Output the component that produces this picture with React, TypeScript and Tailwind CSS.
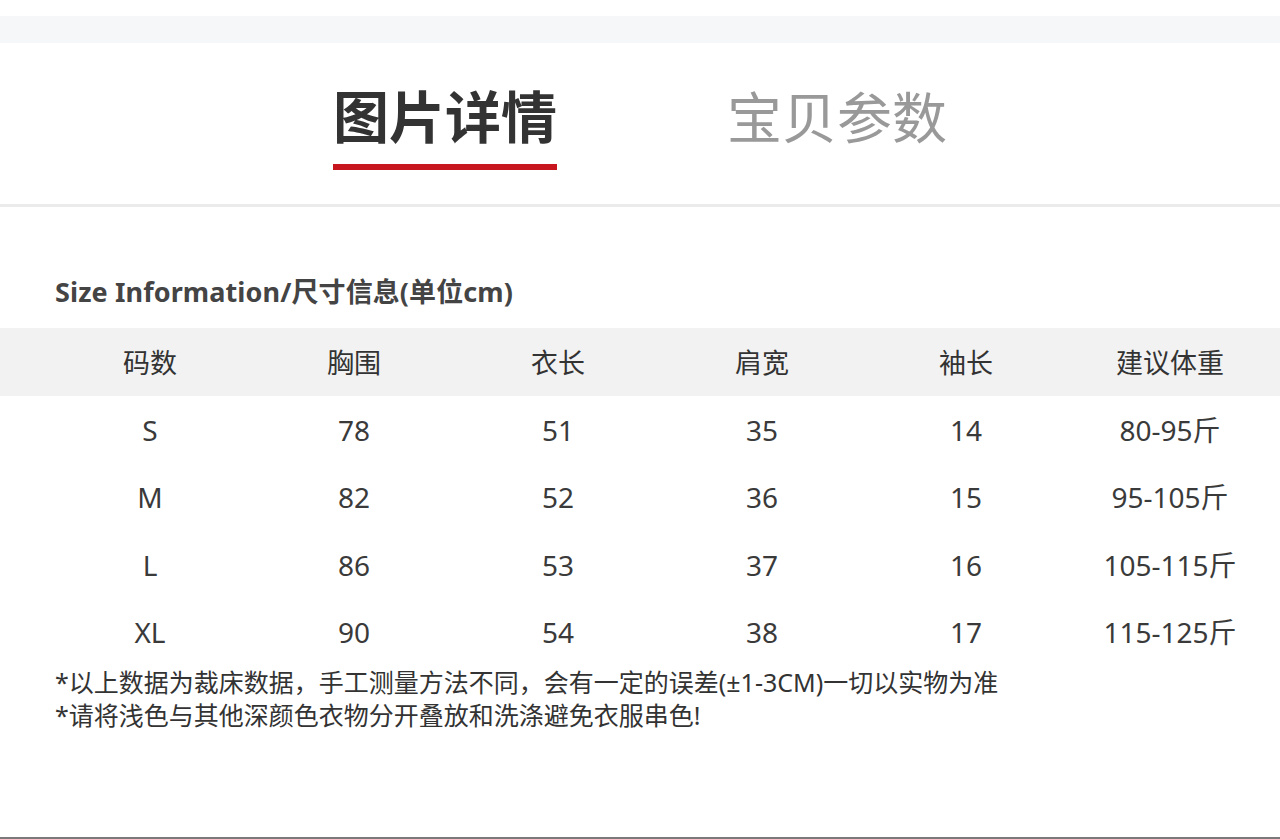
const font = { fontFamily: '"Noto Sans", "Noto Sans CJK SC", sans-serif' };
const cjk = { fontFamily: '"Noto Sans CJK SC", "Noto Sans", sans-serif' };

const headers = ['码数', '胸围', '衣长', '肩宽', '袖长', '建议体重'];

const rows = [
  ['S', '78', '51', '35', '14', '80-95斤'],
  ['M', '82', '52', '36', '15', '95-105斤'],
  ['L', '86', '53', '37', '16', '105-115斤'],
  ['XL', '90', '54', '38', '17', '115-125斤'],
];

export default function App() {
  return (
    <div className="w-[1280px] h-[839px] bg-white overflow-hidden flex flex-col" style={font}>
      <div className="h-4 shrink-0" />
      <div className="h-[27px] shrink-0 bg-[#f5f7f9]" />

      {/* tabs */}
      <div className="h-[161px] shrink-0 flex justify-center gap-[170px] pt-[43px]" style={cjk}>
        <div className="flex flex-col">
          <span className="text-[56px] leading-[56px] font-bold text-[#333333]">图片详情</span>
          <div className="mt-[22px] h-[6px] bg-[#c8161e]" />
        </div>
        <div className="flex flex-col">
          <span className="text-[55px] leading-[56px] text-[#999999]">宝贝参数</span>
        </div>
      </div>
      <div className="h-[3px] shrink-0 bg-[#ebebeb]" />

      {/* size info */}
      <div className="pt-[69px] pl-[55px] h-[121px] shrink-0">
        <h2 className="text-[27px] leading-[32px] font-bold text-[#444444] tracking-[0.1px]">
          Size Information/尺寸信息(单位cm)
        </h2>
      </div>

      <div className="grid grid-cols-[repeat(6,204px)] pl-[48px] h-[68px] items-center bg-[#f2f2f2] text-[27px] text-[#333333]" style={cjk}>
        {headers.map(h => (
          <div key={h} className="text-center">{h}</div>
        ))}
      </div>

      {rows.map(r => (
        <div key={r[0]} className="grid grid-cols-[repeat(6,204px)] pl-[48px] h-[67.5px] items-center text-[28px] text-[#3a3a3a]">
          {r.map((c, i) => (
            <div key={i} className="text-center">{c}</div>
          ))}
        </div>
      ))}

      <div className="pl-[55px] text-[25px] leading-[33px] text-[#333333]">
        <p>*以上数据为裁床数据，手工测量方法不同，会有一定的误差(±1-3CM)一切以实物为准</p>
        <p>*请将浅色与其他深颜色衣物分开叠放和洗涤避免衣服串色!</p>
      </div>

      <div className="flex-1" />
      <div className="h-[2px] shrink-0 bg-[#7a7a7a]" />
    </div>
  );
}
